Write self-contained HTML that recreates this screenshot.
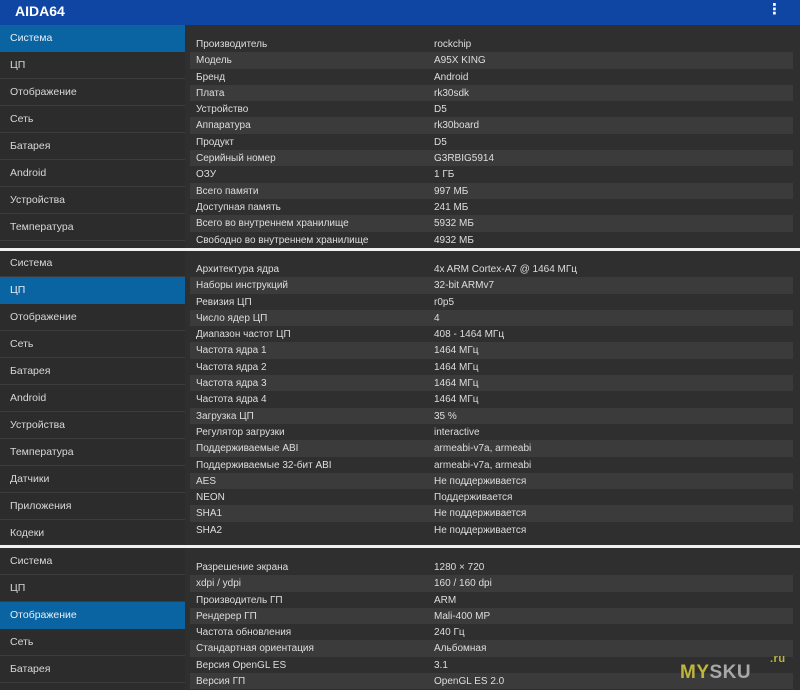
<!DOCTYPE html><html><head><meta charset="utf-8"><style>
*{margin:0;padding:0;box-sizing:border-box}
body{width:800px;height:690px;overflow:hidden;background:#2d2d2d;font-family:"Liberation Sans","DejaVu Sans",sans-serif;color:#dedede;position:relative}
.hdr{position:absolute;left:0;top:0;width:800px;height:25px;background:#0f46a3;color:#fff;font-weight:bold;font-size:14px;padding:3px 0 0 15px}
.dots{position:absolute;right:18px;top:0px;font-size:15px}
.panel{position:absolute;left:0;width:800px;background:#2f2f2f;overflow:hidden}
.side{position:absolute;left:0;top:0;width:185px;height:100%;background:#2c2c2c}
.side div{height:27px;line-height:27px;padding-left:10px;font-size:10.5px;color:#d8d8d8;border-bottom:1px solid #3c3c3c}
.side div.sel{background:#0b64a2;color:#e8eef5;border-bottom-color:#0b64a2}
.rows{position:absolute;left:190px;width:603px}
.rows div{height:16.3px;line-height:17px;font-size:10px;position:relative;padding-left:6px}
.rows div:nth-child(even){background:#3b3b3b}
.rows div span{position:absolute;left:244px}
.sep{position:absolute;left:0;width:800px;height:3px;background:#f0f0f0}
.wm{position:absolute;left:680px;top:662px;font-size:19px;font-weight:bold;color:#a8a8a8;letter-spacing:0.5px}
.wm b{color:#bdb63c}
.wm i{position:absolute;left:90px;top:-9px;font-size:11px;font-style:normal;color:#bdb63c}
</style></head><body>
<div class="hdr">AIDA64<span class="dots">⋮</span></div>
<div class="panel" style="top:25px;height:224px">
<div class="side"><div class="sel">Система</div><div>ЦП</div><div>Отображение</div><div>Сеть</div><div>Батарея</div><div>Android</div><div>Устройства</div><div>Температура</div></div>
<div class="rows" style="top:11px">
<div>Производитель<span>rockchip</span></div>
<div>Модель<span>A95X KING</span></div>
<div>Бренд<span>Android</span></div>
<div>Плата<span>rk30sdk</span></div>
<div>Устройство<span>D5</span></div>
<div>Аппаратура<span>rk30board</span></div>
<div>Продукт<span>D5</span></div>
<div>Серийный номер<span>G3RBIG5914</span></div>
<div>ОЗУ<span>1 ГБ</span></div>
<div>Всего памяти<span>997 МБ</span></div>
<div>Доступная память<span>241 МБ</span></div>
<div>Всего во внутреннем хранилище<span>5932 МБ</span></div>
<div>Свободно во внутреннем хранилище<span>4932 МБ</span></div>
</div></div>
<div class="sep" style="top:248px"></div>
<div class="panel" style="top:251px;height:294px">
<div class="side" style="top:-1px"><div>Система</div><div class="sel">ЦП</div><div>Отображение</div><div>Сеть</div><div>Батарея</div><div>Android</div><div>Устройства</div><div>Температура</div><div>Датчики</div><div>Приложения</div><div>Кодеки</div></div>
<div class="rows" style="top:10px">
<div>Архитектура ядра<span>4x ARM Cortex-A7 @ 1464 МГц</span></div>
<div>Наборы инструкций<span>32-bit ARMv7</span></div>
<div>Ревизия ЦП<span>r0p5</span></div>
<div>Число ядер ЦП<span>4</span></div>
<div>Диапазон частот ЦП<span>408 - 1464 МГц</span></div>
<div>Частота ядра 1<span>1464 МГц</span></div>
<div>Частота ядра 2<span>1464 МГц</span></div>
<div>Частота ядра 3<span>1464 МГц</span></div>
<div>Частота ядра 4<span>1464 МГц</span></div>
<div>Загрузка ЦП<span>35 %</span></div>
<div>Регулятор загрузки<span>interactive</span></div>
<div>Поддерживаемые ABI<span>armeabi-v7a, armeabi</span></div>
<div>Поддерживаемые 32-бит ABI<span>armeabi-v7a, armeabi</span></div>
<div>AES<span>Не поддерживается</span></div>
<div>NEON<span>Поддерживается</span></div>
<div>SHA1<span>Не поддерживается</span></div>
<div>SHA2<span>Не поддерживается</span></div>
</div></div>
<div class="sep" style="top:545px"></div>
<div class="panel" style="top:548px;height:142px">
<div class="side"><div>Система</div><div>ЦП</div><div class="sel">Отображение</div><div>Сеть</div><div>Батарея</div><div>Android</div></div>
<div class="rows" style="top:11px">
<div>Разрешение экрана<span>1280 × 720</span></div>
<div>xdpi / ydpi<span>160 / 160 dpi</span></div>
<div>Производитель ГП<span>ARM</span></div>
<div>Рендерер ГП<span>Mali-400 MP</span></div>
<div>Частота обновления<span>240 Гц</span></div>
<div>Стандартная ориентация<span>Альбомная</span></div>
<div>Версия OpenGL ES<span>3.1</span></div>
<div>Версия ГП<span>OpenGL ES 2.0</span></div>
</div></div>
<div class="wm"><b>MY</b>SKU<i>.ru</i></div>
</body></html>
